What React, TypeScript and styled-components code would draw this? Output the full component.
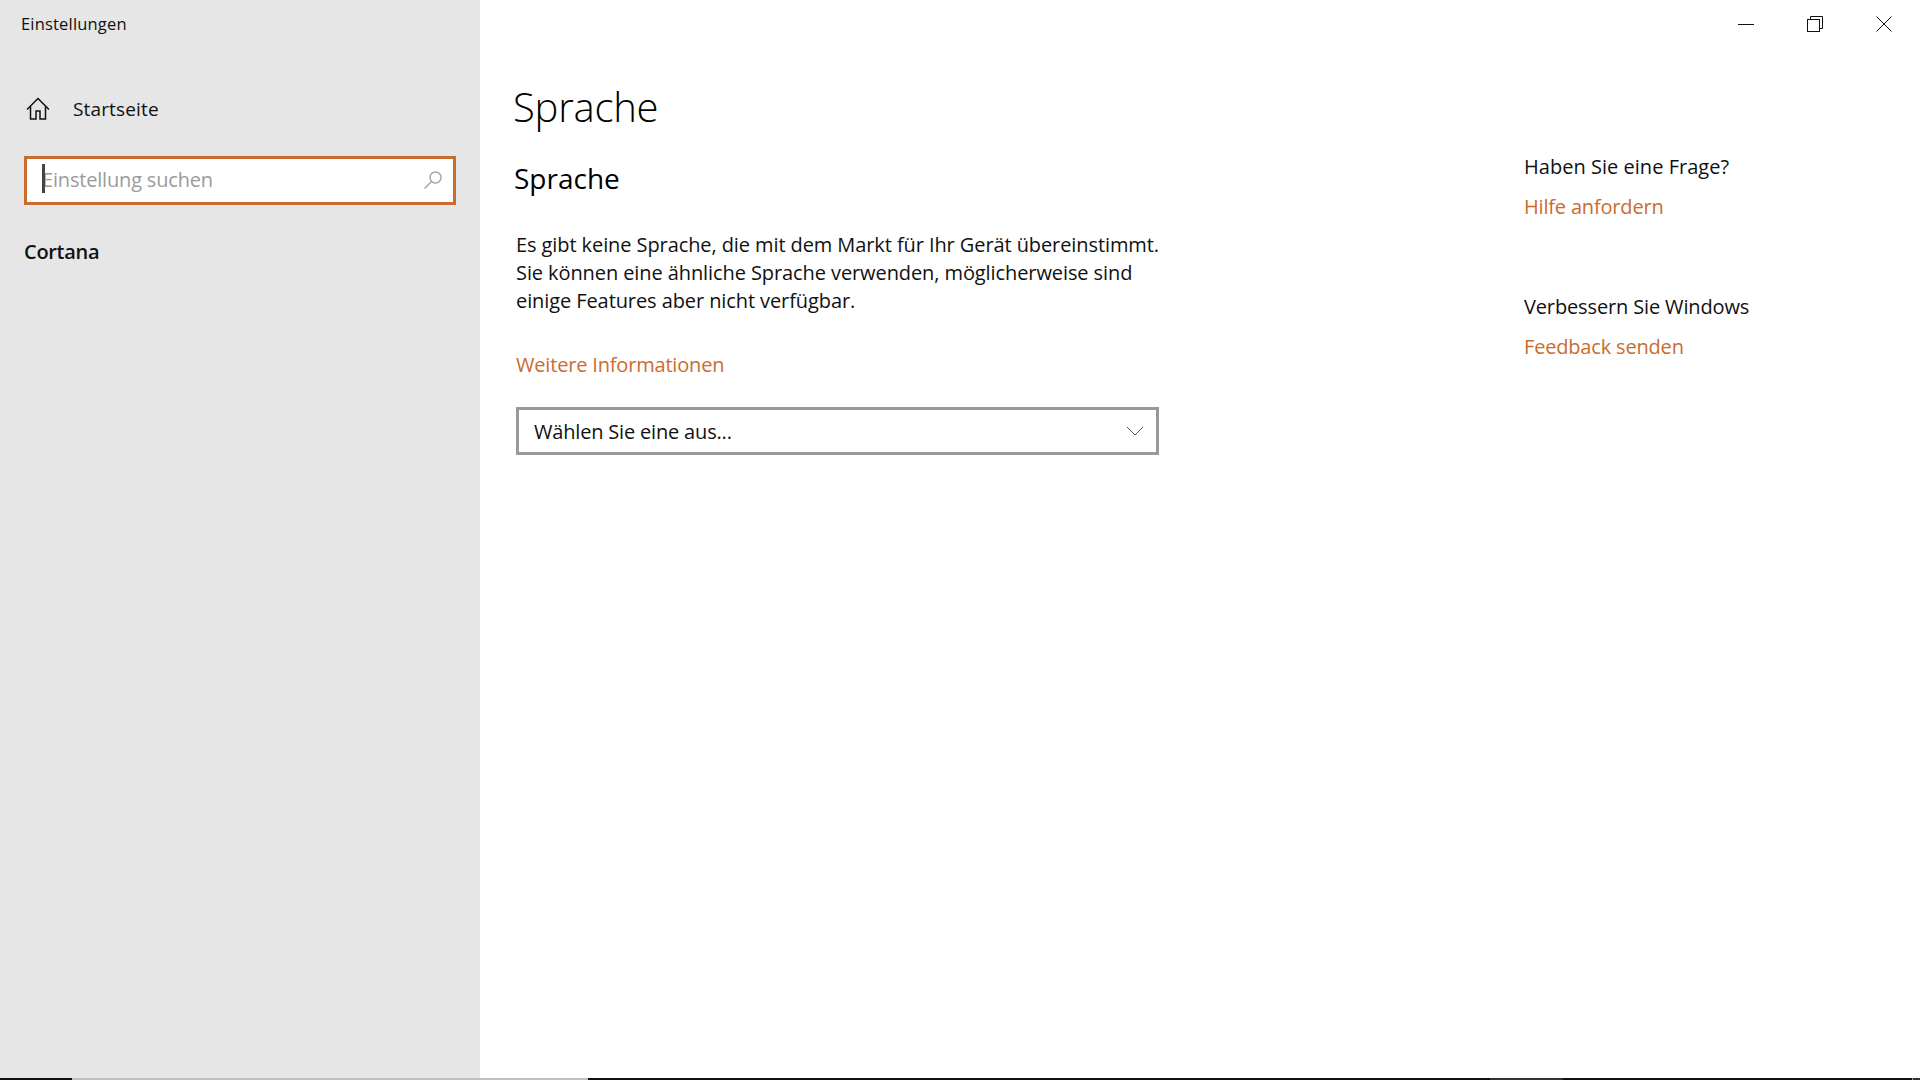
import React from "react";
import styled, { createGlobalStyle } from "styled-components";

const ORANGE = "#ca6c2e";

const GlobalStyle = createGlobalStyle`
  html, body {
    margin: 0;
    padding: 0;
    background: #fff;
    font-family: "Open Sans", "Noto Sans", sans-serif;
    color: #000;
  }
`;

const Page = styled.div`
  width: 1920px;
  height: 1080px;
  display: flex;
  flex-direction: column;
  overflow: hidden;
`;

const Body = styled.div`
  flex: 1;
  display: flex;
  min-height: 0;
`;

const Sidebar = styled.aside`
  width: 480px;
  background: #e6e6e6;
  padding: 14px 24px 0;
  box-sizing: border-box;
`;

const AppTitle = styled.div`
  font-size: 16.5px;
  line-height: 20px;
  letter-spacing: 0.18px;
  margin-left: -3px;
  color: #111;
`;

const HomeRow = styled.div`
  display: flex;
  align-items: center;
  gap: 23px;
  margin-top: 55px;
  margin-left: 2px;
  height: 40px;
  font-size: 19px;
  letter-spacing: 0.15px;
  color: #111;
`;

const SearchBox = styled.div`
  position: relative;
  display: flex;
  align-items: center;
  justify-content: space-between;
  height: 49px;
  margin-top: 27px;
  padding: 0 10px 2px 15px;
  box-sizing: border-box;
  background: #fff;
  border: 3px solid ${ORANGE};
`;

const Placeholder = styled.span`
  font-size: 20px;
  letter-spacing: -0.18px;
  color: #9b9b9b;
`;

const Caret = styled.span`
  position: absolute;
  left: 15px;
  top: 5px;
  width: 3px;
  height: 29px;
  background: #444;
`;

const NavGroup = styled.div`
  margin-top: 32px;
  font-size: 20px;
  line-height: 30px;
  font-weight: 600;
  letter-spacing: -0.3px;
  color: #111;
`;

const Content = styled.main`
  flex: 1;
  display: flex;
  position: relative;
  padding-left: 33px;
`;

const Primary = styled.section`
  width: 646px;
  padding-top: 78px;
`;

const PageTitle = styled.h1`
  margin: 0;
  font-size: 40px;
  line-height: 58px;
  font-weight: 300;
  letter-spacing: -0.25px;
`;

const SectionTitle = styled.h2`
  margin: 22px 0 0 1px;
  font-size: 28px;
  line-height: 40px;
  font-weight: 400;
  letter-spacing: 0;
`;

const Description = styled.p`
  margin: 33px 0 0 3px;
  font-size: 20px;
  line-height: 28px;
  letter-spacing: -0.09px;
  white-space: nowrap;
  color: #111;
`;

const OrangeLink = styled.a`
  display: block;
  color: ${ORANGE};
  font-size: 20px;
  line-height: 28px;
  letter-spacing: -0.18px;
`;

const MoreLink = styled(OrangeLink)`
  margin: 36px 0 0 3px;
`;

const Select = styled.div`
  display: flex;
  align-items: center;
  justify-content: space-between;
  width: 643px;
  height: 48px;
  margin: 28px 0 0 3px;
  padding: 0 12px 0 15px;
  box-sizing: border-box;
  border: 3px solid #999;
  font-size: 20px;
  letter-spacing: -0.18px;
  color: #111;
`;

const Aside = styled.aside`
  margin-left: 365px;
  padding-top: 153px;
  width: 300px;
`;

const HelpBlock = styled.div`
  margin-bottom: 72px;
`;

const HelpTitle = styled.div<{ $spacing: number }>`
  font-size: 20px;
  line-height: 28px;
  margin-bottom: 12px;
  letter-spacing: ${(p) => p.$spacing}px;
  color: #111;
`;

const WindowControls = styled.div`
  position: absolute;
  top: 0;
  right: 2px;
  display: flex;
`;

const ControlButton = styled.div`
  width: 69px;
  height: 48px;
  display: flex;
  align-items: center;
  justify-content: center;
`;

const BottomStrip = styled.div`
  flex: none;
  height: 2px;
  display: flex;
  background: #111;
`;

const StripSegment = styled.div<{ $width: number; $color: string }>`
  width: ${(p) => p.$width}px;
  background: ${(p) => p.$color};
`;

const HomeIcon = () => (
  <svg width="24" height="24" viewBox="0 0 24 24" fill="none" stroke="#111" strokeWidth="1.5">
    <path d="M1 12.5 12 1.5l11 11" />
    <path d="M4.5 9.5v12.5h5.5v-8h4v8h5.5V9.5" />
  </svg>
);

const SearchIcon = () => (
  <svg width="20" height="20" viewBox="0 0 20 20" fill="none" stroke="#a3a3a3" strokeWidth="1.4">
    <circle cx="12.5" cy="7.5" r="5.5" />
    <path d="M8.5 11.5 1.5 18.5" />
  </svg>
);

const Chevron = () => (
  <svg width="18" height="10" viewBox="0 0 18 10" fill="none" stroke="#555" strokeWidth="1">
    <path d="M1 1l8 8 8-8" />
  </svg>
);

export default function App() {
  return (
    <Page>
      <GlobalStyle />
      <Body>
        <Sidebar>
          <AppTitle>Einstellungen</AppTitle>
          <HomeRow>
            <HomeIcon />
            Startseite
          </HomeRow>
          <SearchBox>
            <Caret />
            <Placeholder>Einstellung suchen</Placeholder>
            <SearchIcon />
          </SearchBox>
          <NavGroup>Cortana</NavGroup>
        </Sidebar>
        <Content>
          <Primary>
            <PageTitle>Sprache</PageTitle>
            <SectionTitle>Sprache</SectionTitle>
            <Description>
              Es gibt keine Sprache, die mit dem Markt für Ihr Gerät übereinstimmt.
              <br />
              Sie können eine ähnliche Sprache verwenden, möglicherweise sind
              <br />
              einige Features aber nicht verfügbar.
            </Description>
            <MoreLink>Weitere Informationen</MoreLink>
            <Select>
              Wählen Sie eine aus...
              <Chevron />
            </Select>
          </Primary>
          <Aside>
            <HelpBlock>
              <HelpTitle $spacing={0.03}>Haben Sie eine Frage?</HelpTitle>
              <OrangeLink>Hilfe anfordern</OrangeLink>
            </HelpBlock>
            <HelpBlock>
              <HelpTitle $spacing={-0.14}>Verbessern Sie Windows</HelpTitle>
              <OrangeLink>Feedback senden</OrangeLink>
            </HelpBlock>
          </Aside>
          <WindowControls>
            <ControlButton>
              <svg width="16" height="16" viewBox="0 0 16 16" stroke="#111" strokeWidth="1">
                <path d="M0 8.5h16" />
              </svg>
            </ControlButton>
            <ControlButton>
              <svg width="16" height="16" viewBox="0 0 16 16" fill="none" stroke="#111" strokeWidth="1">
                <path d="M3.5 3.5V.5h12v12h-3" />
                <rect x="0.5" y="3.5" width="12" height="12" />
              </svg>
            </ControlButton>
            <ControlButton>
              <svg width="16" height="16" viewBox="0 0 16 16" stroke="#111" strokeWidth="1">
                <path d="M.5.5l15 15M15.5.5l-15 15" />
              </svg>
            </ControlButton>
          </WindowControls>
        </Content>
      </Body>
      <BottomStrip>
        <StripSegment $width={72} $color="#111" />
        <StripSegment $width={516} $color="#c0c0c0" />
        <StripSegment $width={902} $color="#111" />
        <StripSegment $width={73} $color="#333" />
        <StripSegment $width={349} $color="#111" />
        <StripSegment $width={1} $color="#999" />
        <StripSegment $width={7} $color="#333" />
      </BottomStrip>
    </Page>
  );
}
